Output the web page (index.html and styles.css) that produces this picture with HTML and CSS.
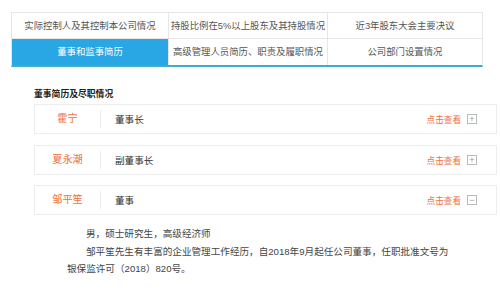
FILE: index.html
```html
<!DOCTYPE html>
<html lang="zh">
<head>
  <meta charset="UTF-8">
  <title>董事和监事简历</title>
  <link rel="stylesheet" href="styles.css">
</head>
<body>
<div class="page">
  <div class="tabs">
    <div class="tab">实际控制人及其控制本公司情况</div>
    <div class="tab">持股比例在5%以上股东及其持股情况</div>
    <div class="tab">近3年股东大会主要决议</div>
    <div class="tab active">董事和监事简历</div>
    <div class="tab">高级管理人员简历、职责及履职情况</div>
    <div class="tab">公司部门设置情况</div>
  </div>

  <div class="section">
    <h3 class="section-title">董事简历及尽职情况</h3>

    <div class="person">
      <div class="name">霍宁</div>
      <div class="post">董事长</div>
      <div class="more">点击查看 <span class="box">+</span></div>
    </div>

    <div class="person">
      <div class="name">夏永潮</div>
      <div class="post">副董事长</div>
      <div class="more">点击查看 <span class="box">+</span></div>
    </div>

    <div class="person open">
      <div class="name">邹平笙</div>
      <div class="post">董事</div>
      <div class="more">点击查看 <span class="box">−</span></div>
    </div>
    <div class="bio">
      <p>男，硕士研究生，高级经济师</p>
      <p>邹平笙先生有丰富的企业管理工作经历，自2018年9月起任公司董事，任职批准文号为银保监许可（2018）820号。</p>
    </div>
  </div>
</div>
</body>
</html>
```

FILE: styles.css
```css
* { box-sizing: border-box; }
html, body {
  margin: 0;
  background: #fff;
  font-family: "Liberation Sans", "Noto Sans CJK SC", sans-serif;
  color: #555;
}

.page {
  width: 500px;
  padding-top: 12px;
}

.tabs {
  margin-left: 11px;
  width: 472px;
  display: grid;
  grid-template-columns: 157px 159px 1fr;
  border: 1px solid #e6e6e6;
  border-bottom: 2px solid #45aac9;
}

.tab {
  height: 26px;
  line-height: 25px;
  text-align: center;
  font-size: 9.4px;
  color: #555;
  border-right: 1px solid #e6e6e6;
  border-bottom: 1px solid #e6e6e6;
  white-space: nowrap;
}
.tab:nth-child(3n) { border-right: none; }
.tab:nth-child(n+4) { border-bottom: none; }

.tab.active {
  background: #29a6e4;
  color: #fff;
}

.section {
  margin-left: 34px;
  width: 463px;
  padding-top: 21px;
}

.section-title {
  margin: 0 0 4px 0;
  font-size: 8.8px;
  font-weight: bold;
  color: #222;
  line-height: 12px;
}

.person {
  display: flex;
  align-items: center;
  height: 30px;
  border: 1px solid #ededed;
  margin-bottom: 11px;
  font-size: 9.6px;
}
.person + .person { margin-bottom: 10px; }
.person.open { margin-bottom: 0; }

.name {
  width: 66px;
  text-align: center;
  color: #f0703a;
  font-size: 10.2px;
  border-right: 1px solid #ededed;
  line-height: 18px;
}

.post {
  flex: 1;
  padding-left: 14px;
  color: #333;
}

.more {
  display: flex;
  align-items: center;
  gap: 6px;
  padding-right: 19px;
  color: #f0703a;
  font-size: 8.6px;
}

.box {
  width: 10px;
  height: 10px;
  border: 1px solid #bbb;
  color: #999;
  font-size: 9px;
  line-height: 8px;
  text-align: center;
}

.bio {
  width: 390px;
  margin-left: 33px;
  padding-top: 10px;
  font-size: 9.6px;
  color: #444;
  line-height: 17.5px;
}

.bio p {
  margin: 0;
  text-indent: 19px;
}
```
